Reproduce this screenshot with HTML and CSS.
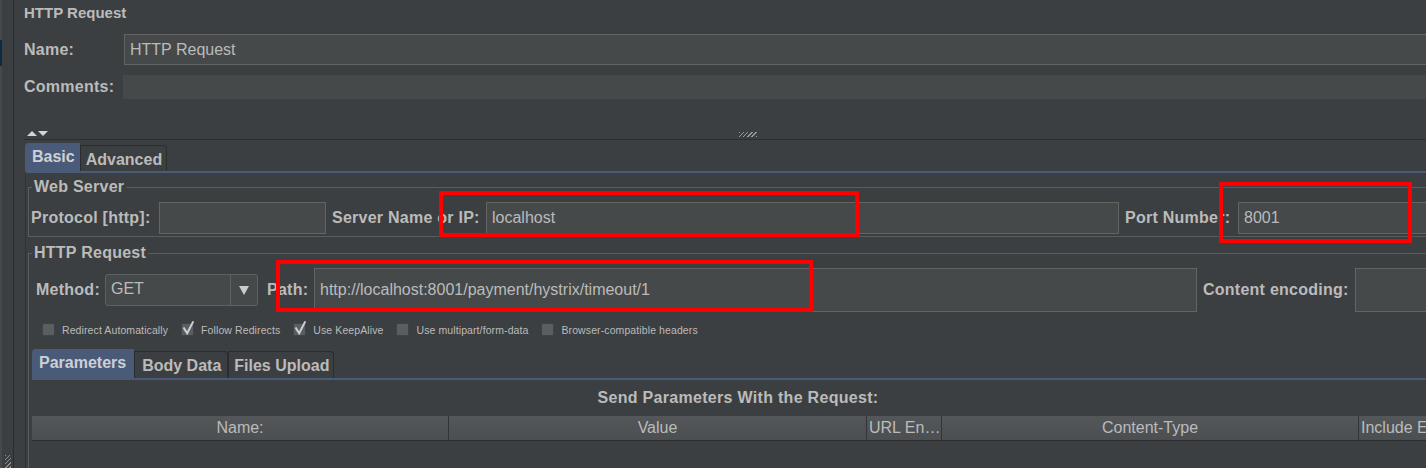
FILE: index.html
```html
<!DOCTYPE html>
<html>
<head>
<meta charset="utf-8">
<title>HTTP Request</title>
<link rel="stylesheet" href="styles.css">
</head>
<body>
<div class="app">
  <div class="tree-edge">
    <div class="tree-strip"><div class="tree-sel"></div></div>
    <div class="tree-grip-col"><div class="tree-grip"></div></div>
  </div>
  <div class="main">
    <div class="title">HTTP Request</div>
    <div class="row name-row">
      <span class="lbl lbl-name">Name:</span>
      <div class="field name-field">HTTP Request</div>
    </div>
    <div class="row comments-row">
      <span class="lbl lbl-comments">Comments:</span>
      <div class="field comments-field"></div>
    </div>
    <div class="splitter">
      <span class="arrow-up"></span><span class="arrow-down"></span>
      <span class="grip"></span>
    </div>
    <div class="tabs">
      <div class="tab selected tab-basic">Basic</div>
      <div class="tab tab-adv">Advanced</div>
    </div>
    <div class="tab-panel">
      <fieldset class="group group-ws">
        <legend>Web Server</legend>
        <div class="row ws-row">
          <span class="lbl w-protocol">Protocol [http]:</span>
          <div class="field f-protocol"></div>
          <span class="lbl w-server">Server Name or IP:</span>
          <div class="field f-server">localhost</div>
          <span class="lbl w-port">Port Number:</span>
          <div class="field f-port">8001</div>
        </div>
      </fieldset>
      <fieldset class="group group-http">
        <legend>HTTP Request</legend>
        <div class="row method-row">
          <span class="lbl w-method">Method:</span>
          <div class="select">
            <span class="select-text">GET</span>
            <span class="select-btn"><span class="select-arrow"></span></span>
          </div>
          <span class="lbl w-path">Path:</span>
          <div class="field f-path">http://localhost:8001/payment/hystrix/timeout/1</div>
          <span class="lbl w-enc">Content encoding:</span>
          <div class="field f-enc"></div>
        </div>
        <div class="row options-row">
          <label class="opt"><span class="cb"></span><span class="opt-text">Redirect Automatically</span></label>
          <label class="opt"><span class="cb"><svg class="tick" width="13" height="13" viewBox="0 0 13 13"><polyline points="2.5,4.5 6.2,10.3 12.3,-1.6" fill="none" stroke="#cfcfcf" stroke-width="2"/></svg></span><span class="opt-text">Follow Redirects</span></label>
          <label class="opt"><span class="cb"><svg class="tick" width="13" height="13" viewBox="0 0 13 13"><polyline points="2.5,4.5 6.2,10.3 12.3,-1.6" fill="none" stroke="#cfcfcf" stroke-width="2"/></svg></span><span class="opt-text">Use KeepAlive</span></label>
          <label class="opt"><span class="cb"></span><span class="opt-text">Use multipart/form-data</span></label>
          <label class="opt"><span class="cb"></span><span class="opt-text">Browser-compatible headers</span></label>
        </div>
        <div class="params">
          <div class="tabs ptabs">
            <div class="tab selected ptab-sel">Parameters</div>
            <div class="tab ptab ptab-body">Body Data</div>
            <div class="tab ptab ptab-files">Files Upload</div>
          </div>
          <div class="params-panel">
            <div class="params-title">Send Parameters With the Request:</div>
            <div class="thead">
              <div class="th th-name">Name:</div>
              <div class="th th-value">Value</div>
              <div class="th th-url">URL Encode?</div>
              <div class="th th-ct">Content-Type</div>
              <div class="th th-inc">Include Equals?</div>
            </div>
            <div class="tbody"></div>
          </div>
        </div>
      </fieldset>
    </div>
  </div>
</div>
<div class="annot annot-server"></div>
<div class="annot annot-port"></div>
<div class="annot annot-path"></div>
</body>
</html>
```
FILE: styles.css
```css
* { box-sizing: border-box; }

body {
  margin: 0;
  width: 1426px;
  height: 468px;
  overflow: hidden;
  position: relative;
  background: #3c3f41;
  font-family: "Liberation Sans", Arial, sans-serif;
  color: #bbbbbb;
}

.app {
  display: flex;
  width: 1500px;
  height: 468px;
}

/* left tree edge */
.tree-edge {
  flex: none;
  width: 14px;
  border-right: 1px solid #2b2b2b;
  display: flex;
}
.tree-strip {
  width: 2px;
  background: #46494b;
}
.tree-sel {
  margin-top: 40px;
  height: 26px;
  background: #0f2b42;
}
.tree-grip-col {
  flex: 1;
  display: flex;
  flex-direction: column;
  justify-content: flex-end;
  padding-left: 3px;
}
.tree-grip {
  width: 6px;
  height: 13px;
  background: repeating-linear-gradient(135deg, #8c8c8c 0 1px, transparent 1px 3px);
}

/* main column */
.main {
  flex: 1;
  min-width: 0;
  padding-left: 10px;
  display: flex;
  flex-direction: column;
  overflow: hidden;
}
.main > * { flex: none; }

.title {
  height: 26px;
  line-height: 26px;
  font-weight: bold;
  font-size: 15px;
}

.row {
  display: flex;
  align-items: center;
}

.lbl {
  flex: none;
  font-weight: bold;
  font-size: 16px;
  letter-spacing: 0.25px;
  white-space: nowrap;
}

.field {
  flex: none;
  background: #45494a;
  border: 1px solid #646464;
  font-size: 16px;
  color: #bbbbbb;
  padding-left: 5px;
  display: flex;
  align-items: center;
  white-space: nowrap;
}

.name-row { margin-top: 8px; height: 31px; }
.lbl-name { width: 100px; }
.name-field { flex: 1; height: 31px; }

.comments-row { margin-top: 10px; height: 24px; }
.lbl-comments { width: 99px; }
.comments-field { flex: 1; height: 24px; border: none; }

/* splitter */
.splitter {
  margin-top: 30px;
  height: 11px;
  padding-top: 2px;
  border-bottom: 1px solid #2b2d2f;
  display: flex;
  align-items: flex-start;
}
.arrow-up {
  margin-left: 3px;
  width: 0; height: 0;
  border-left: 5px solid transparent;
  border-right: 5px solid transparent;
  border-bottom: 5px solid #d4d4d4;
}
.arrow-down {
  margin-left: 1px;
  width: 0; height: 0;
  border-left: 5px solid transparent;
  border-right: 5px solid transparent;
  border-top: 5px solid #d4d4d4;
}
.grip {
  margin-left: 691px;
  margin-top: 1px;
  width: 18px;
  height: 5px;
  background: repeating-linear-gradient(135deg, #9a9a9a 0 1px, #3c3f41 1px 3px);
}

/* tabs */
.tabs {
  display: flex;
  align-items: flex-end;
  height: 31px;
  padding-top: 3px;
  margin-left: 1px;
}
.tab {
  flex: none;
  font-weight: bold;
  font-size: 16px;
  white-space: nowrap;
}
.tab.selected {
  background: #4a5a79;
  color: #cdd0d4;
  border-radius: 4px 0 0 0;
}
.tab-basic {
  height: 28px;
  line-height: 28px;
  padding: 0 5px 0 7px;
}
.tab-adv {
  height: 26px;
  line-height: 27px;
  padding: 0 4px 0 5px;
  border: 1px solid #2a2c2e;
  border-bottom: none;
  border-radius: 0 4px 0 0;
}

.tab-panel {
  flex: 1 1 auto;
  min-height: 0;
  margin-left: 1px;
  border-top: 2px solid #4a5a79;
  border-left: 1px solid #303234;
  padding-left: 2px;
  padding-top: 5px;
}

/* fieldsets */
.group {
  margin: 0;
  border: 1px solid #5a5d5f;
  min-width: 0;
}
.group legend {
  font-weight: bold;
  font-size: 16px;
  letter-spacing: 0.25px;
  line-height: 18px;
  padding: 0 2px 0 2px;
}
.group-ws { padding: 6px 0 2px 2px; }
.group-ws legend { margin-left: 1px; }
.group-http { margin-top: 7px; padding: 6px 0 0 3px; }
.group-http legend { margin-left: 0; }

.ws-row { height: 32px; }
.w-protocol { width: 128px; }
.f-protocol { width: 167px; height: 32px; }
.w-server { width: 154px; margin-left: 6px; }
.f-server { width: 633px; height: 32px; }
.w-port { width: 113px; margin-left: 6px; }
.f-port { width: 220px; height: 32px; }

.method-row { height: 44px; padding-left: 4px; }
.w-method { width: 69px; }
.select {
  flex: none;
  width: 153px;
  height: 32px;
  background: #45494a;
  border: 1px solid #5e6163;
  border-radius: 3px;
  display: flex;
  font-size: 16px;
}
.select-text {
  flex: 1;
  padding-left: 5px;
  line-height: 28px;
}
.select-btn {
  width: 27px;
  border-left: 1px solid #5e6163;
  display: flex;
  align-items: center;
  justify-content: center;
}
.select-arrow {
  width: 0; height: 0;
  border-left: 5px solid transparent;
  border-right: 5px solid transparent;
  border-top: 9px solid #cccccc;
}
.w-path { width: 47px; margin-left: 9px; }
.f-path { width: 883px; height: 44px; }
.w-enc { width: 152px; margin-left: 6px; }
.f-enc { width: 200px; height: 44px; }

/* options */
.options-row {
  margin-top: 9px;
  height: 17px;
  padding-left: 10px;
}
.opt {
  display: flex;
  align-items: center;
  margin-right: 13px;
  font-size: 10.5px;
  letter-spacing: 0.1px;
}
.cb {
  flex: none;
  width: 13px;
  height: 13px;
  background: #5a5e60;
  border: 1px solid #404345;
  border-radius: 2px;
  margin-right: 7px;
  position: relative;
}
.tick {
  display: block;
  margin: -1px 0 0 -1px;
  overflow: visible;
}

/* parameters */
.params {
  margin-top: 11px;
  width: 1412px;
}
.ptabs {
  height: 29px;
  padding-top: 0;
  margin-left: 0;
}
.ptab-sel {
  height: 29px;
  line-height: 28px;
  padding: 0 8px 0 7px;
}
.ptab {
  height: 27px;
  line-height: 27px;
  border: 1px solid #2a2c2e;
  border-bottom: none;
  border-radius: 0 4px 0 0;
}
.ptab-body { padding: 0 6px 0 7px; }
.ptab-files { padding: 0 4px 0 5px; }
.params-panel {
  border-top: 2px solid #4a5a79;
}
.params-title {
  padding-top: 8px;
  height: 28px;
  line-height: 20px;
  text-align: center;
  font-weight: bold;
  font-size: 16px;
  letter-spacing: 0.3px;
}
.thead {
  margin-top: 8px;
  display: flex;
  height: 25px;
  background: linear-gradient(#53575a, #4b4f51);
  border-bottom: 1px solid #2b2d2f;
}
.th {
  flex: none;
  height: 24px;
  line-height: 24px;
  font-size: 16px;
  text-align: center;
  border-right: 1px solid #323436;
  white-space: nowrap;
  overflow: hidden;
  text-overflow: ellipsis;
}
.th-name { width: 417px; }
.th-value { width: 418px; }
.th-url { width: 75px; text-align: left; padding-left: 2px; }
.th-ct { width: 417px; }
.th-inc { flex: 1; text-align: left; padding-left: 2px; border-right: none; }
.tbody { height: 40px; }

/* annotations drawn over the screenshot */
.annot {
  position: absolute;
  border: 4px solid #ff0000;
}
.annot-server { left: 439px; top: 191px; width: 420px; height: 46px; }
.annot-port { left: 1219px; top: 182px; width: 193px; height: 61px; }
.annot-path { left: 276px; top: 260px; width: 537px; height: 52px; }
```
